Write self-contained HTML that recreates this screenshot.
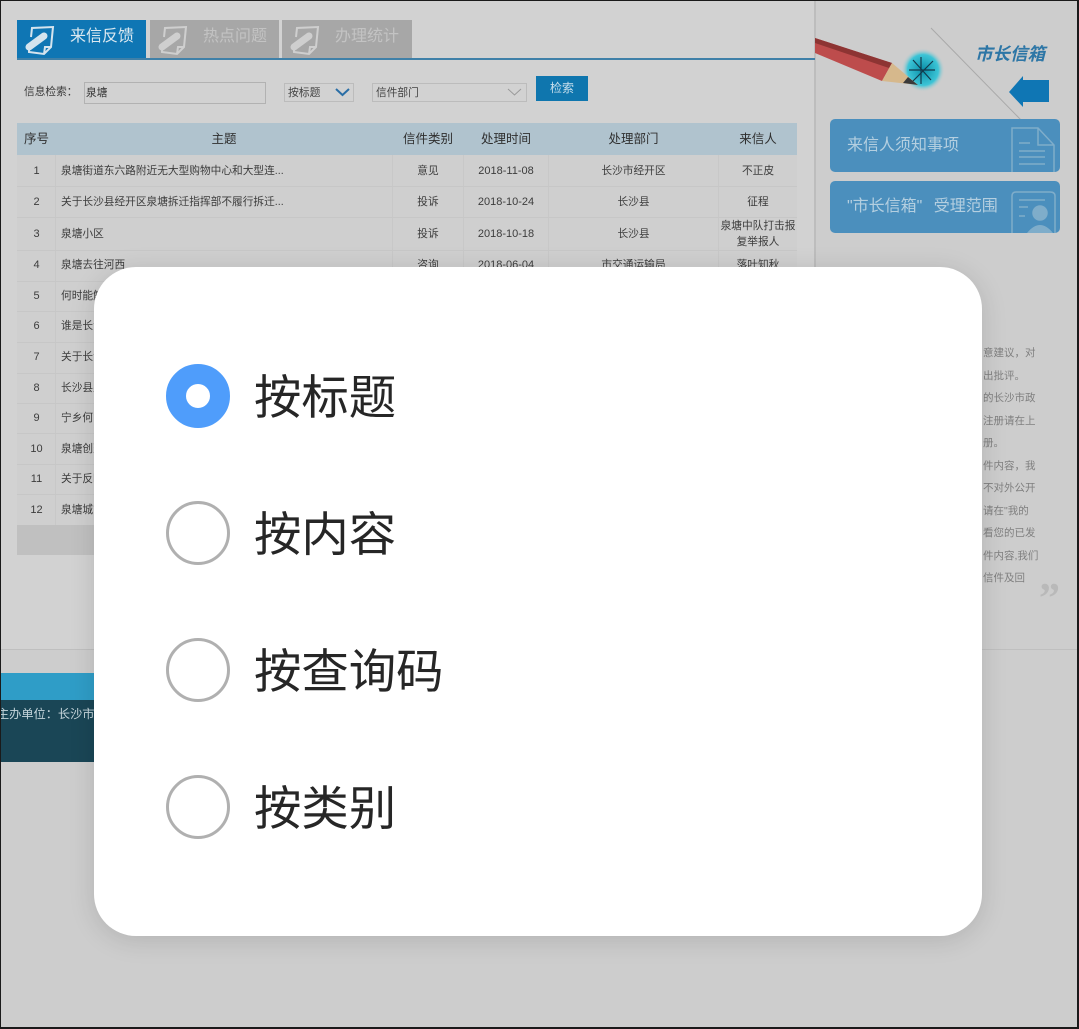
<!DOCTYPE html>
<html lang="zh"><head><meta charset="utf-8"><style>
html,body{margin:0;padding:0;width:1079px;height:1029px;overflow:hidden;background:#cdcdcd;font-family:"Liberation Sans","Noto Sans CJK SC",sans-serif}
.a{position:absolute;white-space:nowrap}
.c{text-align:center}
.cell{font-size:10.700px;line-height:14px;margin-top:1px;color:#3c3c3c;text-align:center;position:absolute;white-space:nowrap}
.d{font-size:11px}
.hl{position:absolute;left:17px;width:780px;height:1px;background:#c7c7c7}
.vl{position:absolute;top:155px;height:370px;width:1px;background:#c8c8c8}
.tab{position:absolute;top:20px;height:38px;background:#a7a7a7}
.tt{position:absolute;font-size:16px;color:#c3c3c3;top:26px;white-space:nowrap;line-height:22px}
.th{position:absolute;top:123px;height:32px;line-height:32px;font-size:12.500px;color:#2f2f2f;text-align:center}
.r{position:absolute;left:166px;width:64px;height:64px;box-sizing:border-box;border-radius:50%;border:3px solid #b0b0b0;background:#fff}
.ol{position:absolute;left:254px;font-size:47.400px;line-height:60px;color:#262626;white-space:nowrap}
.st{position:absolute;left:983px;font-size:10.500px;line-height:14px;color:#7f7f7f;white-space:nowrap}
</style></head><body>
<div id="root" style="position:relative;width:1079px;height:1029px;overflow:hidden">

<div class="a" style="left:0;top:0;width:815px;height:650px;background:#d2d2d2"></div>
<div class="a" style="left:815px;top:0;width:264px;height:650px;background:#cdcdcd"></div>
<div class="a" style="left:814px;top:0;width:2px;height:650px;background:#bdbdbd"></div>
<div class="a" style="left:0;top:649px;width:1079px;height:1px;background:#bfbfbf"></div>

<div class="tab" style="left:17px;width:129px;background:#0f76b4"></div>
<div class="tab" style="left:150px;width:129px"></div>
<div class="tab" style="left:282px;width:130px"></div>
<div class="a" style="left:17px;top:58px;width:798px;height:2px;background:#3f80a8"></div>

<svg class="a" style="left:24px;top:25px" width="32" height="32" viewBox="0 0 32 32" fill="none"><path d="M7 12L8 3L29 2L27 22L20 29L5 27V25M20 29L21 22L27 22" stroke="#d5e4ee" stroke-width="2"/><path d="M5 22L20 11" stroke="#0f76b4" stroke-width="11"/><path d="M5 22L20 11" stroke="#d5e4ee" stroke-width="7" stroke-linecap="round"/></svg>
<svg class="a" style="left:157px;top:25px" width="32" height="32" viewBox="0 0 32 32" fill="none"><path d="M7 12L8 3L29 2L27 22L20 29L5 27V25M20 29L21 22L27 22" stroke="#cfcfcf" stroke-width="2"/><path d="M5 22L20 11" stroke="#a7a7a7" stroke-width="11"/><path d="M5 22L20 11" stroke="#cfcfcf" stroke-width="7" stroke-linecap="round"/></svg>
<svg class="a" style="left:289px;top:25px" width="32" height="32" viewBox="0 0 32 32" fill="none"><path d="M7 12L8 3L29 2L27 22L20 29L5 27V25M20 29L21 22L27 22" stroke="#cfcfcf" stroke-width="2"/><path d="M5 22L20 11" stroke="#a7a7a7" stroke-width="11"/><path d="M5 22L20 11" stroke="#cfcfcf" stroke-width="7" stroke-linecap="round"/></svg>

<div class="tt" style="left:70px;top:26px;color:#dbe8f0">来信反馈</div>
<div class="tt" style="left:203px;top:26px">热点问题</div>
<div class="tt" style="left:335px;top:26px">办理统计</div>

<div class="a" style="left:24px;top:85px;font-size:10.700px;line-height:14px;color:#3c3c3c">信息检索：</div>
<div class="a" style="left:84px;top:82px;width:182px;height:22px;box-sizing:border-box;border:1px solid #b2b2b2;font-size:10.700px;line-height:20px;color:#333;padding-left:1px">泉塘</div>
<div class="a" style="left:284px;top:83px;width:70px;height:19px;box-sizing:border-box;border:1px solid #bcbcbc;font-size:10.800px;line-height:18px;color:#444;padding-left:3px">按标题</div>
<svg class="a" style="left:335px;top:87px" width="15" height="10" viewBox="0 0 15 10" fill="none"><path d="M1 2L7.500 8L14 2" stroke="#2a6ea6" stroke-width="2"/></svg>
<div class="a" style="left:372px;top:83px;width:155px;height:19px;box-sizing:border-box;border:1px solid #bcbcbc;font-size:10.700px;line-height:18px;color:#444;padding-left:3px">信件部门</div>
<svg class="a" style="left:507px;top:87px" width="15" height="10" viewBox="0 0 15 10" fill="none"><path d="M1 2L7.500 8L14 2" stroke="#999" stroke-width="1"/></svg>
<div class="a c" style="left:536px;top:76px;width:52px;height:25px;background:#0f76ae;color:#c8dfec;font-size:12px;line-height:25px">检索</div>

<div class="a" style="left:17px;top:123px;width:780px;height:32px;background:#b0c3ce"></div>
<div class="a" style="left:17px;top:155px;width:780px;height:370px;background:#cfcfcf"></div>
<div class="a" style="left:17px;top:525px;width:780px;height:30px;background:#c0c0c0"></div>
<div class="th" style="left:17px;width:39px">序号</div>
<div class="th" style="left:56px;width:336px">主题</div>
<div class="th" style="left:392px;width:72px">信件类别</div>
<div class="th" style="left:464px;width:84px">处理时间</div>
<div class="th" style="left:548px;width:171px">处理部门</div>
<div class="th" style="left:719px;width:78px">来信人</div>

<div class="vl" style="left:55px"></div><div class="vl" style="left:392px"></div><div class="vl" style="left:463px"></div><div class="vl" style="left:548px"></div><div class="vl" style="left:718px"></div>
<div class="hl" style="top:186px"></div><div class="hl" style="top:217px"></div><div class="hl" style="top:250px"></div><div class="hl" style="top:281px"></div><div class="hl" style="top:311px"></div><div class="hl" style="top:342px"></div><div class="hl" style="top:373px"></div><div class="hl" style="top:403px"></div><div class="hl" style="top:433px"></div><div class="hl" style="top:464px"></div><div class="hl" style="top:494px"></div>

<div class="cell d" style="left:17px;width:39px;top:163px">1</div><div class="cell" style="left:61px;top:163px">泉塘街道东六路附近无大型购物中心和大型连...</div><div class="cell" style="left:392px;width:72px;top:163px">意见</div><div class="cell d" style="left:464px;width:84px;top:163px">2018-11-08</div><div class="cell" style="left:548px;width:171px;top:163px">长沙市经开区</div><div class="cell" style="left:719px;width:78px;top:163px">不正皮</div>
<div class="cell d" style="left:17px;width:39px;top:194px">2</div><div class="cell" style="left:61px;top:194px">关于长沙县经开区泉塘拆迁指挥部不履行拆迁...</div><div class="cell" style="left:392px;width:72px;top:194px">投诉</div><div class="cell d" style="left:464px;width:84px;top:194px">2018-10-24</div><div class="cell" style="left:548px;width:171px;top:194px">长沙县</div><div class="cell" style="left:719px;width:78px;top:194px">征程</div>
<div class="cell d" style="left:17px;width:39px;top:226px">3</div><div class="cell" style="left:61px;top:226px">泉塘小区</div><div class="cell" style="left:392px;width:72px;top:226px">投诉</div><div class="cell d" style="left:464px;width:84px;top:226px">2018-10-18</div><div class="cell" style="left:548px;width:171px;top:226px">长沙县</div><div class="cell" style="left:719px;width:78px;top:217px;line-height:16px">泉塘中队打击报<br>复举报人</div>
<div class="cell d" style="left:17px;width:39px;top:257px">4</div><div class="cell" style="left:61px;top:257px">泉塘去往河西</div><div class="cell" style="left:392px;width:72px;top:257px">咨询</div><div class="cell d" style="left:464px;width:84px;top:257px">2018-06-04</div><div class="cell" style="left:548px;width:171px;top:257px">市交通运输局</div><div class="cell" style="left:719px;width:78px;top:257px">落叶知秋</div>
<div class="cell d" style="left:17px;width:39px;top:288px">5</div><div class="cell" style="left:61px;top:288px">何时能解</div>
<div class="cell d" style="left:17px;width:39px;top:318px">6</div><div class="cell" style="left:61px;top:318px">谁是长沙</div>
<div class="cell d" style="left:17px;width:39px;top:349px">7</div><div class="cell" style="left:61px;top:349px">关于长沙</div>
<div class="cell d" style="left:17px;width:39px;top:380px">8</div><div class="cell" style="left:61px;top:380px">长沙县泉</div>
<div class="cell d" style="left:17px;width:39px;top:410px">9</div><div class="cell" style="left:61px;top:410px">宁乡何时</div>
<div class="cell d" style="left:17px;width:39px;top:441px">10</div><div class="cell" style="left:61px;top:441px">泉塘创建</div>
<div class="cell d" style="left:17px;width:39px;top:471px">11</div><div class="cell" style="left:61px;top:471px">关于反映</div>
<div class="cell d" style="left:17px;width:39px;top:502px">12</div><div class="cell" style="left:61px;top:502px">泉塘城管</div>

<svg class="a" style="left:815px;top:20px" width="264" height="110" viewBox="0 0 264 110" fill="none">
<defs><radialGradient id="g"><stop offset="0" stop-color="#0a8fa8"/><stop offset=".7" stop-color="#3cc4d6"/><stop offset="1" stop-color="#cdcdcd" stop-opacity="0"/></radialGradient></defs>
<circle cx="108" cy="50" r="22" fill="url(#g)"/>
<path d="M0 18L77 43L67 61L0 33Z" fill="#bd4c4c"/><path d="M0 18L77 43L74 48L0 23Z" fill="#8d3433"/>
<path d="M77 43L103 65L67 61Z" fill="#d6b88c"/><path d="M93 57L103 65L88 63Z" fill="#3a3a3a"/>
<path d="M98 40L116 60M118 41L98 61M106 37V64M94 50H120" stroke="#123a4c" stroke-width="1.200"/>
<path d="M116 8L206 100" stroke="#a9a9a9" stroke-width="1"/>
<path d="M194 72L208 56V60H234V82H208V87Z" fill="#0f76b4"/>
</svg>
<div class="a" style="left:975px;top:42px;font-size:17.500px;line-height:24px;font-style:italic;font-weight:bold;color:#2d76a6">市长信箱</div>

<div class="a" style="left:830px;top:119px;width:230px;height:53px;background:#4b8fbd;border-radius:5px"></div>
<div class="a" style="left:830px;top:181px;width:230px;height:52px;background:#4b8fbd;border-radius:5px"></div>
<div class="a" style="left:847px;top:135px;font-size:16px;line-height:22px;color:#b4cfe0">来信人须知事项</div>
<div class="a" style="left:847px;top:196px;font-size:16px;line-height:22px;color:#b4cfe0;word-spacing:7px">"市长信箱" 受理范围</div>
<svg class="a" style="left:1008px;top:125px" width="50" height="108" viewBox="0 0 50 108" fill="none" stroke="#7fadca" stroke-width="1.500">
<path d="M4 47V3H30L46 20V47M30 3V20H46M11 18H22M11 26H37M11 32H37M11 39H37"/>
<path d="M4 108V71Q4 67 8 67H42Q47 67 47 71V108M11 75H37M11 82H20M11 91H17"/>
<circle cx="32" cy="88" r="7" fill="#7fadca"/><path d="M19 108Q32 92 45 108Z" fill="#7fadca" stroke="none"/>
</svg>

<div class="st" style="top:346px">意建议，对</div>
<div class="st" style="top:369px">出批评。</div>
<div class="st" style="top:391px">的长沙市政</div>
<div class="st" style="top:414px">注册请在上</div>
<div class="st" style="top:436px">册。</div>
<div class="st" style="top:459px">件内容，我</div>
<div class="st" style="top:481px">不对外公开</div>
<div class="st" style="top:504px">请在"我的</div>
<div class="st" style="top:526px">看您的已发</div>
<div class="st" style="top:549px">件内容,我们</div>
<div class="st" style="top:571px">信件及回</div>
<div class="a" style="left:1039px;top:578px;font-family:'Liberation Serif',serif;font-size:42px;line-height:42px;font-weight:bold;color:#b9b9b9">”</div>

<div class="a" style="left:0;top:673px;width:100px;height:27px;background:#2f9dc7"></div>
<div class="a" style="left:0;top:700px;width:100px;height:62px;background:#1a4656"></div>
<div class="a" style="left:-3px;top:706px;width:97px;overflow:hidden;font-size:12.200px;line-height:17px;color:#c6d6dc">主办单位：长沙市人民政府</div>

<div class="a" style="left:94px;top:267px;width:888px;height:669px;background:#fff;border-radius:42px;box-shadow:0 4px 26px rgba(0,0,0,.13)"></div>

<div class="r" style="top:364px;border:20px solid #4f9dfb"></div>
<div class="ol" style="top:369px">按标题</div>
<div class="r" style="top:501px"></div>
<div class="ol" style="top:506px">按内容</div>
<div class="r" style="top:638px"></div>
<div class="ol" style="top:643px">按查询码</div>
<div class="r" style="top:775px"></div>
<div class="ol" style="top:780px">按类别</div>

<div class="a" style="left:0;top:0;width:1079px;height:1029px;box-sizing:border-box;border:1px solid #1a1a1a;border-bottom-width:2px;border-right-width:2px"></div>
</div>
</body></html>
